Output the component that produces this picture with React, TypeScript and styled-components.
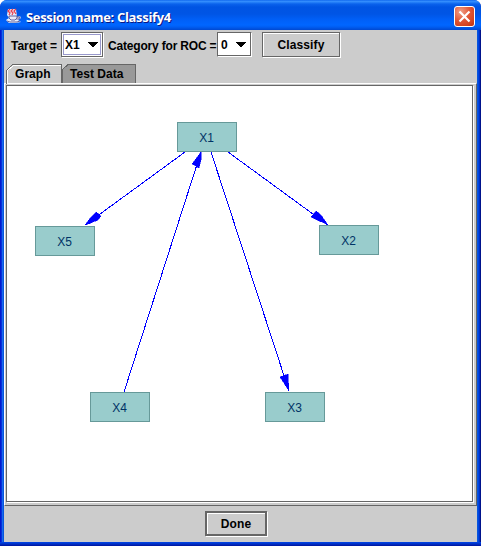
import React from "react";
import styled, { createGlobalStyle } from "styled-components";

const Global = createGlobalStyle`
  * { box-sizing: border-box; }
  html, body { margin: 0; padding: 0; background: #fff; overflow: hidden; }
  body { font: bold 12px/14px "Liberation Sans", Arial, sans-serif; color: #000; }
`;

const Window = styled.div`
  width: 481px;
  height: 546px;
  display: flex;
  flex-direction: column;
  overflow: hidden;
  border-radius: 7px 7px 0 0;
  padding: 0 4px 4px;
  background:
    linear-gradient(#0046e8, #0030c4 50%, #00139c) bottom / 100% 4px no-repeat,
    linear-gradient(90deg, #0019cf 0 1px, #0831d9 1px 2px, #166aee 2px 3px, #0855dd 3px 4px) left / 4px 100% no-repeat,
    linear-gradient(90deg, #0855dd 0 1px, #0046e0 1px 2px, #0030c8 2px 3px, #00138c 3px 4px) right / 4px 100% no-repeat,
    #0055e5;
`;

const TitleBar = styled.header`
  flex: none;
  height: 30px;
  margin: 0 -4px;
  padding: 2px 6px 0 6px;
  display: flex;
  align-items: center;
  background: linear-gradient(#0058e8 0, #3a93ff 1px, #2a85fa 2px, #0a62ec 4px, #0054e3 7px, #0055e5 14px, #0060f8 20px, #0066ff 25px, #005df2 27px, #0048d0 30px);
`;

const Title = styled.h1`
  flex: 1;
  margin: 1px 0 0 4px;
  font: bold 13px/18px "Open Sans", sans-serif;
  letter-spacing: -0.33px;
  white-space: nowrap;
  color: #fff;
  text-shadow: 1px 1px 0 #0a1883;
`;

const CloseButton = styled.button`
  width: 21px;
  height: 21px;
  padding: 0;
  border: 1px solid #fff;
  border-radius: 3px;
  display: grid;
  place-items: center;
  background: radial-gradient(circle at 30% 25%, #f0a088, #e25838 45%, #d44420 75%, #b83010);
`;

const Body = styled.main`
  flex: 1;
  display: flex;
  flex-direction: column;
  background: #ccc;
`;

const Toolbar = styled.div`
  display: flex;
  height: 34px;
  padding: 2px 0 0 7px;
`;

const Label = styled.span<{ $width: number; $indent?: number; $spacing?: number }>`
  width: ${(p) => p.$width}px;
  flex: none;
  padding: 7px 0 0 ${(p) => p.$indent ?? 0}px;
  letter-spacing: ${(p) => p.$spacing ?? 0}px;
  white-space: nowrap;
`;

const Combo = styled.div<{ $width: number; $focused?: boolean }>`
  width: ${(p) => p.$width}px;
  height: 25px;
  flex: none;
  display: flex;
  justify-content: space-between;
  padding: 5px ${(p) => (p.$focused ? 4 : 5)}px 0 3px;
  border: 1px solid #666;
  border-right-color: ${(p) => (p.$focused ? "#666" : "#fff")};
  border-bottom-color: ${(p) => (p.$focused ? "#666" : "#fff")};
  background: #fff;
  box-shadow: ${(p) => (p.$focused
    ? "inset 0 0 0 1px #fff, inset 0 0 0 2px #9999cc, 1px 1px 0 #fff"
    : "inset -1px -1px 0 #666")};
  svg { margin-top: 4px; }
`;

const Button = styled.button<{ $width: number; $thick?: boolean }>`
  width: ${(p) => p.$width}px;
  height: 25px;
  padding: 1px 0 0;
  font: inherit;
  letter-spacing: 0.1px;
  color: #000;
  background: #ccc;
  border: ${(p) => (p.$thick ? 2 : 1)}px solid #666;
  box-shadow: inset 1px 1px 0 #fff, 1px 1px 0 #fff;
`;

const ClassifySlot = styled.div`
  margin-left: 10px;
`;

const Tabs = styled.div`
  display: flex;
  height: 19px;
  padding-left: 2px;
`;

const Tab = styled.div<{ $width: number; $indent: number }>`
  position: relative;
  isolation: isolate;
  width: ${(p) => p.$width}px;
  height: 19px;
  padding: 3px 0 0 ${(p) => p.$indent}px;
  letter-spacing: 0.05px;
  white-space: nowrap;
  svg { position: absolute; left: 0; top: 0; z-index: -1; }
`;

const Pane = styled.section`
  height: 423px;
  flex: none;
  padding: 1px 3px 3px 1px;
  border: 1px solid #666;
  border-top-color: #fff;
  border-left-color: #fff;
`;

const Canvas = styled.div`
  position: relative;
  height: 100%;
  background: #fff;
  border: 1px solid #666;
  box-shadow: 1px 1px 0 #fff;
`;

const Edges = styled.svg`
  display: block;
`;

const Node = styled.div<{ $x: number; $y: number }>`
  position: absolute;
  left: ${(p) => p.$x}px;
  top: ${(p) => p.$y}px;
  width: 60px;
  height: 30px;
  display: grid;
  place-items: center;
  padding: 1px 1px 0 0;
  font-weight: normal;
  color: #003366;
  background: #99cccc;
  border: 1px solid #669999;
`;

const Footer = styled.footer`
  flex: 1;
  display: flex;
  justify-content: center;
  padding: 5px 9px 0 0;
`;

const nodes = [
  { name: "X1", x: 170, y: 36 },
  { name: "X5", x: 28, y: 140 },
  { name: "X2", x: 312, y: 139 },
  { name: "X4", x: 83, y: 306 },
  { name: "X3", x: 258, y: 306 },
];

const edges = [
  { line: "M185 152L85 225", head: "85,225 91,217 96,212 101,216 98,220 91,223" },
  { line: "M228 152L328 225", head: "328,225 315,219 311,217 316,211 321,215" },
  { line: "M211 152L289 391", head: "289,391 280,377 288,374" },
  { line: "M124 392L201 152", head: "201,152 192,164 199,168 201,160" },
];

const Arrow = () => (
  <svg width="11" height="6" viewBox="0 0 11 6" shapeRendering="crispEdges">
    <path d="M0 0H11L6 5H5Z" />
  </svg>
);

const JavaIcon = () => (
  <svg width="16" height="16" viewBox="0 0 16 16">
    <path d="M2 1H10L11 9L14 8L15 10L12 12L15 14L10 15L3 15L0 12L3 10L1 7Z" fill="#fff" opacity=".9" />
    <path d="M4 1L2 3L4 5L3 7M7 1L5 3L7 5L6 7M10 1L8 3L10 6" fill="none" stroke="#e84050" strokeWidth="1.3" />
    <path d="M3 8H11V10L9 12H5L3 10ZM11 9H14L13 11H10M1 13L4 14H11L14 13" fill="#e9e9f7" stroke="#65649c" />
  </svg>
);

export default function App() {
  return (
    <>
      <Global />
      <Window>
        <TitleBar>
          <JavaIcon />
          <Title>Session name: Classify4</Title>
          <CloseButton aria-label="Close">
            <svg width="13" height="13" viewBox="0 0 13 13">
              <path d="M1.5 1.5L11.5 11.5M11.5 1.5L1.5 11.5" stroke="#fff" strokeWidth="2.2" />
            </svg>
          </CloseButton>
        </TitleBar>
        <Body>
          <Toolbar>
            <Label $width={50}>Target =</Label>
            <Combo $width={42} $focused>X1<Arrow /></Combo>
            <Label $width={114} $indent={5} $spacing={-0.18}>Category for ROC =</Label>
            <Combo $width={35}>0<Arrow /></Combo>
            <ClassifySlot>
              <Button $width={78}>Classify</Button>
            </ClassifySlot>
          </Toolbar>
          <Tabs>
            <Tab $width={56} $indent={9}>
              <svg width="56" height="20" shapeRendering="crispEdges">
                <path d="M1.5 20V6.5L7.5 1.5H55" fill="none" stroke="#fff" />
                <path d="M.5 20V6.5L6.5 .5H55.5V19" fill="none" stroke="#666" />
              </svg>
              Graph
            </Tab>
            <Tab $width={74} $indent={8}>
              <svg width="74" height="19" shapeRendering="crispEdges">
                <path d="M0 19V6L6 .5H73.5V19Z" fill="#999" stroke="#666" />
              </svg>
              Test Data
            </Tab>
          </Tabs>
          <Pane>
            <Canvas>
              <Edges width="464" height="414" viewBox="7 86 464 414" shapeRendering="crispEdges">
                {edges.map((e) => (
                  <g key={e.line}>
                    <path d={e.line} stroke="#00f" fill="none" />
                    <polygon points={e.head} fill="#00f" stroke="#00f" strokeWidth="0.5" />
                  </g>
                ))}
              </Edges>
              {nodes.map((n) => (
                <Node key={n.name} $x={n.x} $y={n.y}>{n.name}</Node>
              ))}
            </Canvas>
          </Pane>
          <Footer>
            <Button $width={62} $thick>Done</Button>
          </Footer>
        </Body>
      </Window>
    </>
  );
}
